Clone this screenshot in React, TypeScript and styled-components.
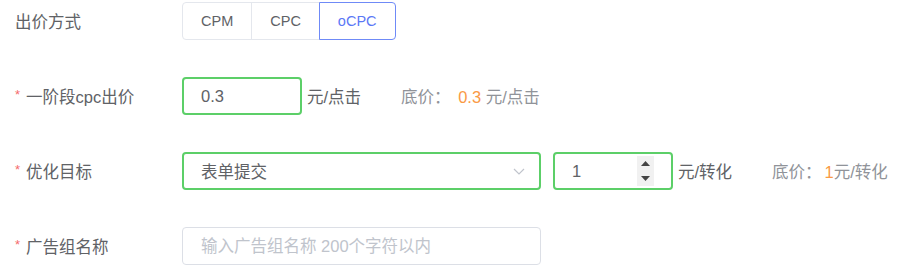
import React, { useState } from 'react';
import styled, { createGlobalStyle } from 'styled-components';

const GlobalStyle = createGlobalStyle`
	body {
		margin: 0;
		background: #ffffff;
		font-family: 'Liberation Sans', 'Noto Sans CJK SC', sans-serif;
	}
`;

const Form = styled.div`
	display: flex;
	flex-direction: column;
	gap: 37px;
	padding: 2px 0 0 15px;
	font-size: 16.5px;
	color: #606266;
`;

const Row = styled.div`
	display: flex;
	align-items: center;
	height: 38px;
`;

const Label = styled.div`
	display: flex;
	align-items: center;
	width: 167px;
	flex-shrink: 0;
	color: #606266;
	white-space: nowrap;
`;

const Star = styled.span`
	color: #f56c6c;
	font-size: 13px;
	margin-right: 6px;
	position: relative;
	top: -2px;
`;

const Group = styled.div`
	display: flex;
	height: 38px;
`;

const Seg = styled.button<{ active: boolean }>`
	height: 38px;
	padding: 0 18px;
	margin-left: -1px;
	font-family: inherit;
	font-size: 14.5px;
	background: #ffffff;
	color: ${({ active }) => (active ? '#5b78f6' : '#606266')};
	border: 1px solid ${({ active }) => (active ? '#6f8af7' : '#e4e7ed')};
	position: relative;
	z-index: ${({ active }) => (active ? 1 : 0)};
	cursor: pointer;
	&:first-child {
		margin-left: 0;
		border-radius: 4px 0 0 4px;
	}
	&:last-child {
		border-radius: 0 4px 4px 0;
	}
`;

const Box = styled.div<{ w: number; focused?: boolean; gapL?: number }>`
	box-sizing: border-box;
	display: flex;
	align-items: center;
	width: ${({ w }) => w}px;
	height: 38px;
	margin-left: ${({ gapL }) => gapL || 0}px;
	border: ${({ focused }) => (focused ? '2px solid #5ccf68' : '1px solid #dcdfe6')};
	border-radius: 4px;
	padding-left: ${({ focused }) => (focused ? 17 : 18)}px;
	background: #ffffff;
	flex-shrink: 0;
`;

const Field = styled.input`
	flex: 1;
	min-width: 0;
	border: none;
	outline: none;
	padding: 0;
	font-family: inherit;
	font-size: 16.5px;
	color: #606266;
	background: transparent;
	&::placeholder {
		color: #c0c4cc;
	}
`;

const SelectText = styled.span`
	flex: 1;
	color: #606266;
`;

const Chevron = styled.svg`
	margin-right: 14px;
`;

const Spinner = styled.div`
	display: flex;
	flex-direction: column;
	justify-content: space-around;
	align-items: center;
	width: 17px;
	align-self: stretch;
	margin: 2px 17px 2px 0;
	background: #f1f1f1;
`;

const Unit = styled.span`
	margin-left: 5px;
	margin-right: 40px;
	color: #606266;
	white-space: nowrap;
`;

const Hint = styled.span`
	color: #909399;
	white-space: nowrap;
`;

const Price = styled.span`
	color: #fa9a45;
	margin-left: 3px;
`;

function App() {
	const [mode, setMode] = useState('oCPC');
	const [cpc, setCpc] = useState('0.3');
	const [goal, setGoal] = useState('1');
	const [name, setName] = useState('');

	return (
		<>
			<GlobalStyle />
			<Form>
				<Row>
					<Label>出价方式</Label>
					<Group>
						{['CPM', 'CPC', 'oCPC'].map((m) => (
							<Seg key={m} active={mode === m} onClick={() => setMode(m)}>
								{m}
							</Seg>
						))}
					</Group>
				</Row>
				<Row>
					<Label>
						<Star>*</Star>一阶段cpc出价
					</Label>
					<Box w={120} focused>
						<Field value={cpc} onChange={(e) => setCpc(e.target.value)} />
					</Box>
					<Unit>元/点击</Unit>
					<Hint>
						底价：{' '}<Price>0.3</Price> 元/点击
					</Hint>
				</Row>
				<Row>
					<Label>
						<Star>*</Star>优化目标
					</Label>
					<Box w={359} focused>
						<SelectText>表单提交</SelectText>
						<Chevron width="12" height="7" viewBox="0 0 12 7">
							<polyline points="1,1 6,6 11,1" fill="none" stroke="#c0c4cc" strokeWidth="1.2" />
						</Chevron>
					</Box>
					<Box w={120} focused gapL={12}>
						<Field value={goal} onChange={(e) => setGoal(e.target.value)} />
						<Spinner>
							<svg width="9" height="5" viewBox="0 0 9 5">
								<polygon points="0,5 4.5,0 9,5" fill="#444" />
							</svg>
							<svg width="9" height="5" viewBox="0 0 9 5">
								<polygon points="0,0 4.5,5 9,0" fill="#444" />
							</svg>
						</Spinner>
					</Box>
					<Unit>元/转化</Unit>
					<Hint>
						底价：<Price>1</Price>元/转化
					</Hint>
				</Row>
				<Row>
					<Label>
						<Star>*</Star>广告组名称
					</Label>
					<Box w={359}>
						<Field
							value={name}
							placeholder="输入广告组名称 200个字符以内"
							onChange={(e) => setName(e.target.value)}
						/>
					</Box>
				</Row>
			</Form>
		</>
	);
}

export default App;
